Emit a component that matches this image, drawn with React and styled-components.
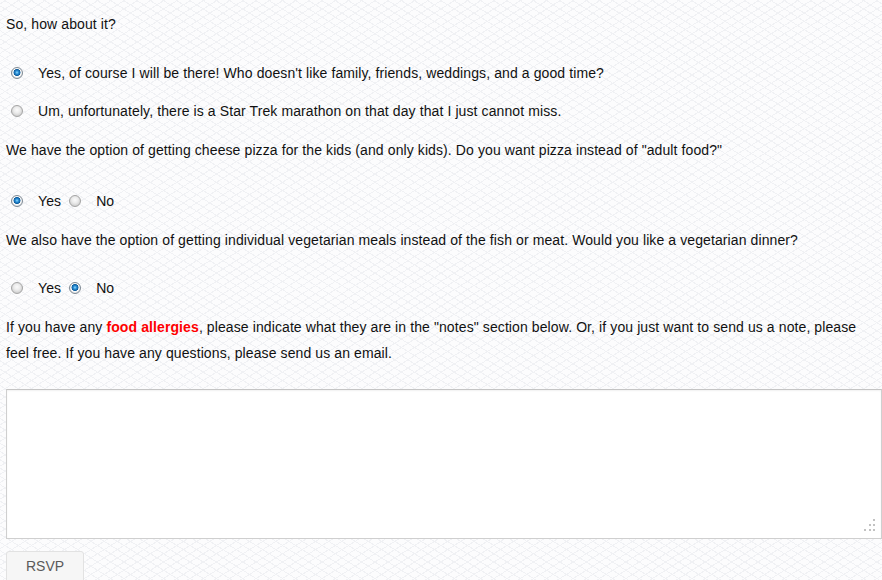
import React from "react";
import styled, { createGlobalStyle } from "styled-components";

const Global = createGlobalStyle`
  html, body {
    margin: 0;
    padding: 0;
  }
  body {
    background-color: #fcfcfd;
    background-image:
      repeating-linear-gradient(32deg, transparent 0 6px, #f0f1f4 6px 7px),
      repeating-linear-gradient(-32deg, transparent 0 6px, #f0f1f4 6px 7px);
    font-family: "Liberation Sans", Arial, sans-serif;
    font-size: 14px;
    letter-spacing: 0.1px;
    color: #111;
    overflow: hidden;
  }
`;

const Page = styled.form`
  padding: 11px 0 0 6px;
  width: 876px;
`;

const Para = styled.p`
  margin: 0;
  line-height: 26px;
`;

const Group = styled.div`
  display: flex;
  flex-direction: ${(p) => (p.$inline ? "row" : "column")};
  gap: 12px;
  margin: ${(p) => p.$top || 23}px 0 13px 5px;
  align-items: ${(p) => (p.$inline ? "center" : "flex-start")};
`;

const Option = styled.label`
  display: flex;
  align-items: center;
  height: 26px;
  gap: 15px;
  margin-right: ${(p) => (p.$inline ? "-4px" : "0")};
`;

const Radio = styled.input.attrs({ type: "radio" })`
  appearance: none;
  -webkit-appearance: none;
  margin: 0;
  width: 12px;
  height: 12px;
  border-radius: 50%;
  border: 1px solid #a4a4a4;
  box-sizing: border-box;
  background: radial-gradient(circle at 50% 40%, #fbfbfb 0, #ececec 3px, #cfcfcf 6px);
  &:checked {
    border-color: #7f8a94;
    background: radial-gradient(
      circle at 50% 45%,
      #8fdcff 0,
      #2a8ed6 1.6px,
      #0e5c9c 3.2px,
      #ffffff 3.8px,
      #f2f2f2 4.5px,
      #cfd4d8 6px
    );
  }
`;

const Red = styled.strong`
  color: #f00;
`;

const NotesWrap = styled.div`
  position: relative;
  margin: 23px 0 12px;
`;

const Notes = styled.textarea`
  display: block;
  width: 100%;
  height: 150px;
  box-sizing: border-box;
  border: 1px solid #cfcfcf;
  border-top-color: #c4c4c4;
  box-shadow: inset 0 1px 2px rgba(0, 0, 0, 0.06);
  background: #fff;
  resize: none;
  outline: none;
  font-family: "Liberation Sans", Arial, sans-serif;
  font-size: 14px;
`;

const Grip = styled.span`
  position: absolute;
  right: 7px;
  bottom: 8px;
  width: 2px;
  height: 2px;
  background: #c2c2c2;
  box-shadow: -4px 0 #c2c2c2, -9px 0 #c2c2c2, 0 -5px #c2c2c2, -4px -5px #c2c2c2,
    0 -10px #c2c2c2;
`;

const Button = styled.button`
  width: 78px;
  height: 32px;
  background: #f6f6f6;
  border: 1px solid #e2e2e2;
  border-radius: 3px;
  color: #5a5a5a;
  font-family: "Liberation Sans", Arial, sans-serif;
  font-size: 14px;
  padding: 0;
  padding-bottom: 2px;
`;

export default function App() {
  return (
    <>
      <Global />
      <Page onSubmit={(e) => e.preventDefault()}>
        <Para>So, how about it?</Para>
        <Group>
          <Option>
            <Radio name="attend" defaultChecked />
            Yes, of course I will be there! Who doesn't like family, friends, weddings, and a good time?
          </Option>
          <Option>
            <Radio name="attend" />
            Um, unfortunately, there is a Star Trek marathon on that day that I just cannot miss.
          </Option>
        </Group>
        <Para>
          We have the option of getting cheese pizza for the kids (and only kids). Do you want pizza instead of "adult food?"
        </Para>
        <Group $inline $top={25}>
          <Option $inline>
            <Radio name="pizza" defaultChecked />
            Yes
          </Option>
          <Option $inline>
            <Radio name="pizza" />
            No
          </Option>
        </Group>
        <Para>
          We also have the option of getting individual vegetarian meals instead of the fish or meat. Would you like a vegetarian dinner?
        </Para>
        <Group $inline $top={22}>
          <Option $inline>
            <Radio name="veg" />
            Yes
          </Option>
          <Option $inline>
            <Radio name="veg" defaultChecked />
            No
          </Option>
        </Group>
        <Para>
          If you have any <Red>food allergies</Red>, please indicate what they are in the "notes" section below. Or, if you just want to send us a note, please feel free. If you have any questions, please send us an email.
        </Para>
        <NotesWrap>
          <Notes />
          <Grip />
        </NotesWrap>
        <Button type="submit">RSVP</Button>
      </Page>
    </>
  );
}
